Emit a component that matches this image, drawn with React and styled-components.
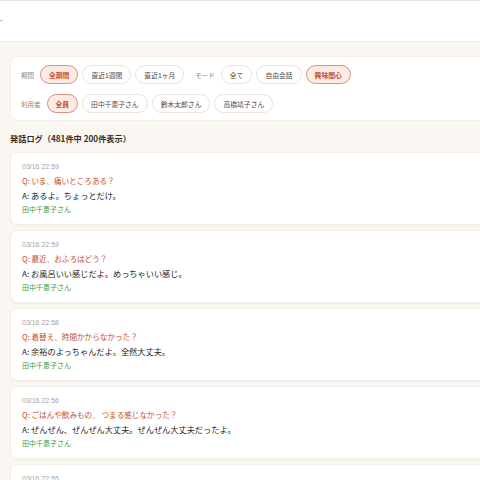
import React from "react";
import styled, { createGlobalStyle } from "styled-components";

const Global = createGlobalStyle`
  html, body { margin: 0; padding: 0; background: #faf7f2; overflow: hidden; }
  body { font-family: "Noto Sans CJK JP", "Noto Sans", sans-serif; }
`;

const Header = styled.header`
  height: 40px;
  background: #fff;
  border-top: 1px solid #e4e4e4;
  border-bottom: 1px solid #efebe6;
  display: flex;
  align-items: center;
`;

const HeaderMark = styled.span`
  font-family: "Liberation Sans", sans-serif;
  font-size: 9px;
  color: #333;
  line-height: 1;
  margin-top: -6px;
`;

const Main = styled.main`
  width: 640px;
  padding: 14px 0 0 10px;
  box-sizing: border-box;
`;

const Panel = styled.section`
  background: #fff;
  border-radius: 8px;
  border: 1px solid #f3eee8;
  padding: 8px 10px 7px;
  display: flex;
  flex-direction: column;
  gap: 10px;
`;

const FilterRow = styled.div`
  display: flex;
  align-items: center;
  gap: 4px;
`;

const Label = styled.span`
  font-size: 6.5px;
  color: #8f8a86;
  margin-right: 2px;
  margin-left: ${(p) => (p.$spaced ? "7px" : "0")};
`;

const Chip = styled.button`
  height: 19px;
  box-sizing: border-box;
  padding: 0 8px;
  border-radius: 10px;
  font-family: inherit;
  font-size: 6.8px;
  font-weight: ${(p) => (p.$active ? 700 : 400)};
  color: ${(p) => (p.$active ? "#c4502f" : "#4f4a47")};
  background: ${(p) => (p.$active ? "#fcebe4" : "#fff")};
  border: 1px solid ${(p) => (p.$active ? "#dc8f79" : "#e8e3de")};
  display: inline-flex;
  align-items: center;
  cursor: pointer;
`;

const Heading = styled.h2`
  margin: 11px 0 8px;
  font-size: 8.2px;
  line-height: 12px;
  font-weight: 700;
  color: #3b2c22;
`;

const List = styled.div`
  display: flex;
  flex-direction: column;
  gap: 5px;
`;

const Card = styled.article`
  background: #fff;
  border-radius: 7px;
  border: 1px solid #f2ede7;
  box-shadow: 0 1px 2px rgba(120, 100, 80, 0.05);
  padding: 7px 11px 7px;
  display: flex;
  flex-direction: column;
`;

const Time = styled.div`
  font-family: "Liberation Sans", "Noto Sans CJK JP", sans-serif;
  font-size: 7px;
  line-height: 14px;
  color: #a8a4a0;
`;

const Question = styled.div`
  font-size: 7.6px;
  line-height: 14px;
  color: #c4502f;
`;

const Answer = styled.div`
  font-size: 8.2px;
  line-height: 14px;
  color: #222;
`;

const Speaker = styled.div`
  font-size: 7px;
  line-height: 15px;
  color: #3e9a3e;
`;

const logs = [
  { t: "03/16 22:59", q: "Q: いま、痛いところある？", a: "A: あるよ。ちょっとだけ。", n: "田中千恵子さん" },
  { t: "03/16 22:59", q: "Q: 最近、おふろはどう？", a: "A: お風呂いい感じだよ。めっちゃいい感じ。", n: "田中千恵子さん" },
  { t: "03/16 22:58", q: "Q: 着替え、時間かからなかった？", a: "A: 余裕のよっちゃんだよ。全然大丈夫。", n: "田中千恵子さん" },
  { t: "03/16 22:56", q: "Q: ごはんや飲みもの、 つまる感じなかった？", a: "A: ぜんぜん、ぜんぜん大丈夫。ぜんぜん大丈夫だったよ。", n: "田中千恵子さん" },
  { t: "03/16 22:55", q: "Q: 夜はよく眠れてる？", a: "A: うん、よく眠れてるよ。", n: "田中千恵子さん" },
];

export default function App() {
  return (
    <>
      <Global />
      <Header>
        <HeaderMark>.</HeaderMark>
      </Header>
      <Main>
        <Panel>
          <FilterRow>
            <Label>期間</Label>
            <Chip $active>全期間</Chip>
            <Chip>直近1週間</Chip>
            <Chip>直近1ヶ月</Chip>
            <Label $spaced>モード</Label>
            <Chip>全て</Chip>
            <Chip>自由会話</Chip>
            <Chip $active>興味関心</Chip>
          </FilterRow>
          <FilterRow>
            <Label>利用者</Label>
            <Chip $active>全員</Chip>
            <Chip>田中千恵子さん</Chip>
            <Chip>鈴木太郎さん</Chip>
            <Chip>高橋靖子さん</Chip>
          </FilterRow>
        </Panel>
        <Heading>発話ログ（481件中 200件表示）</Heading>
        <List>
          {logs.map((l, i) => (
            <Card key={i}>
              <Time>{l.t}</Time>
              <Question>{l.q}</Question>
              <Answer>{l.a}</Answer>
              <Speaker>{l.n}</Speaker>
            </Card>
          ))}
        </List>
      </Main>
    </>
  );
}
